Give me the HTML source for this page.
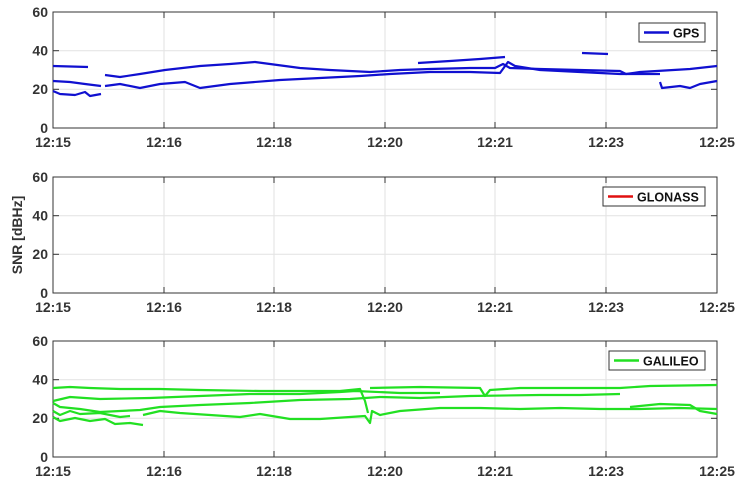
<!DOCTYPE html>
<html><head><style>
html,body{margin:0;padding:0;background:#fff;}
svg{display:block;font-family:"Liberation Sans",sans-serif;font-weight:bold;}
</style></head><body>
<svg width="741" height="484" viewBox="0 0 741 484" xmlns="http://www.w3.org/2000/svg">
<defs>
<g id="ax">
  <rect x="53" y="0" width="664" height="116" fill="#fff"/>
  <g stroke="#e2e2e2" stroke-width="1">
    <line x1="164" y1="0" x2="164" y2="116"/><line x1="274" y1="0" x2="274" y2="116"/>
    <line x1="385" y1="0" x2="385" y2="116"/><line x1="495" y1="0" x2="495" y2="116"/>
    <line x1="606" y1="0" x2="606" y2="116"/>
    <line x1="53" y1="38.7" x2="717" y2="38.7"/><line x1="53" y1="77.3" x2="717" y2="77.3"/>
  </g>
  <g stroke="#333" stroke-width="1">
    <line x1="164" y1="116" x2="164" y2="110"/><line x1="274" y1="116" x2="274" y2="110"/>
    <line x1="385" y1="116" x2="385" y2="110"/><line x1="495" y1="116" x2="495" y2="110"/>
    <line x1="606" y1="116" x2="606" y2="110"/>
    <line x1="164" y1="0" x2="164" y2="6"/><line x1="274" y1="0" x2="274" y2="6"/>
    <line x1="385" y1="0" x2="385" y2="6"/><line x1="495" y1="0" x2="495" y2="6"/>
    <line x1="606" y1="0" x2="606" y2="6"/>
    <line x1="53" y1="38.7" x2="59" y2="38.7"/><line x1="53" y1="77.3" x2="59" y2="77.3"/>
    <line x1="717" y1="38.7" x2="711" y2="38.7"/><line x1="717" y1="77.3" x2="711" y2="77.3"/>
  </g>
  <rect x="53" y="0" width="664" height="116" fill="none" stroke="#333" stroke-width="1"/>
  <g font-size="14" fill="#333" text-anchor="end">
    <text x="48" y="5">60</text><text x="48" y="43.5">40</text>
    <text x="48" y="82">20</text><text x="48" y="121">0</text>
  </g>
  <g font-size="14" fill="#333" text-anchor="middle">
    <text x="53" y="135">12:15</text><text x="164" y="135">12:16</text>
    <text x="274" y="135">12:18</text><text x="385" y="135">12:20</text>
    <text x="495" y="135">12:21</text><text x="606" y="135">12:23</text>
    <text x="717" y="135">12:25</text>
  </g>
</g>
</defs>

<g transform="translate(0,12)">
  <use href="#ax"/>
  <g fill="none" stroke="#1010d0" stroke-width="2.2" stroke-linejoin="round">
    <polyline points="53,54 88,55"/>
    <polyline points="53,69 70,70 85,72 101,74"/>
    <polyline points="53,79 60,82 75,83 85,80 90,84 101,82"/>
    <polyline points="105,63 120,65 140,62 165,58 200,54 230,52 255,50 270,52 300,56 330,58 370,60 400,58 430,57 470,56 495,56 503,52 510,56 540,57 580,58 620,59 626,62 640,60 690,57 717,54"/>
    <polyline points="105,74 120,72 140,76 160,72 185,70 200,76 230,72 280,68 320,66 360,64 390,62 430,60 470,60 500,61 508,50 515,54 540,58 580,60 620,62 660,62"/>
    <polyline points="418,51 450,49 480,47 505,45"/>
    <polyline points="582,41 608,42"/>
    <polyline points="660,70 662,76 680,74 690,76 700,72 717,69"/>
  </g>
  <rect x="639" y="11" width="66" height="19" fill="#fff" stroke="#333" stroke-width="1"/>
  <line x1="644" y1="20.5" x2="669" y2="20.5" stroke="#1010d0" stroke-width="2.5"/>
  <text x="673" y="25.5" font-size="12.5" fill="#111">GPS</text>
</g>

<g transform="translate(0,177)">
  <use href="#ax"/>
  <rect x="603" y="10" width="102" height="19" fill="#fff" stroke="#333" stroke-width="1"/>
  <line x1="608" y1="19.5" x2="633" y2="19.5" stroke="#e01010" stroke-width="2.5"/>
  <text x="637" y="24.5" font-size="12.5" fill="#111">GLONASS</text>
</g>

<g transform="translate(0,341)">
  <use href="#ax"/>
  <g fill="none" stroke="#22e022" stroke-width="2.2" stroke-linejoin="round">
    <polyline points="53,47 70,46 90,47 120,48 160,48 200,49 260,50 300,50 340,50 360,48 365,60 368,72"/>
    <polyline points="370,47 420,46 480,47 485,55 490,49 520,47 580,47 620,47 650,45 717,44"/>
    <polyline points="53,60 70,56 100,58 150,57 200,55 250,53 300,53 340,51 355,50 400,52 440,52"/>
    <polyline points="53,62 60,66 80,68 100,71 120,70 140,69 160,66 200,64 250,62 300,59 350,58 380,56 420,57 470,55 540,54 580,54 620,53"/>
    <polyline points="143,74 160,70 180,72 210,74 240,76 260,73 290,78 320,78 350,76 365,75 370,82 372,70 380,74 400,70 440,67 480,67 520,68 560,67 600,68 640,68 680,67 717,68"/>
    <polyline points="53,70 60,74 70,70 80,73 100,72 120,76 130,75"/>
    <polyline points="53,76 60,80 75,77 90,80 105,78 115,83 130,82 143,84"/>
    <polyline points="630,66 660,63 690,64 700,70 717,73"/>
  </g>
  <rect x="609" y="10" width="96" height="19" fill="#fff" stroke="#333" stroke-width="1"/>
  <line x1="614" y1="19.5" x2="639" y2="19.5" stroke="#22e022" stroke-width="2.5"/>
  <text x="643" y="24.5" font-size="12.5" fill="#111">GALILEO</text>
</g>

<text transform="translate(22,235) rotate(-90)" text-anchor="middle" font-size="14" fill="#333">SNR [dBHz]</text>
</svg>
</body></html>
